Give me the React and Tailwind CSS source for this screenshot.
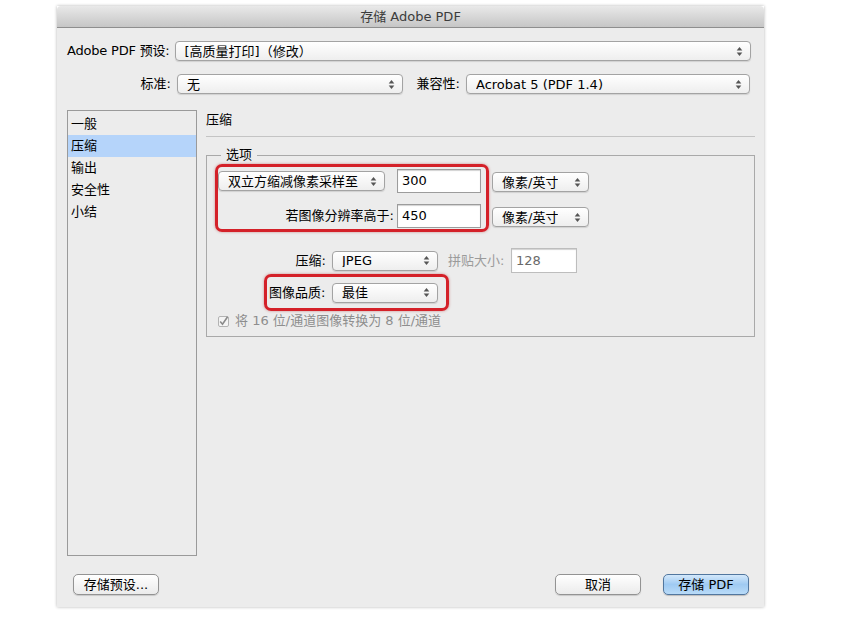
import React from 'react';

const Arrows = () => (
  <svg width="7" height="11" viewBox="0 0 7 11" className="shrink-0">
    <path d="M3.5 1 L6.3 4.4 H0.7 Z" fill="#555" />
    <path d="M3.5 10 L6.3 6.6 H0.7 Z" fill="#555" />
  </svg>
);

function Select({ className = '', children }) {
  return (
    <div className={`flex h-[20px] shrink-0 items-center justify-between rounded-[4px] border border-[#a3a3a3] bg-gradient-to-b from-white to-[#eeeeee] pl-[9px] pr-[7px] shadow-[0_1px_1px_rgba(0,0,0,0.12)] ${className}`}>
      <span className="truncate leading-none">{children}</span>
      <Arrows />
    </div>
  );
}

function Field({ className = '', children }) {
  return (
    <div className={`flex shrink-0 items-center border border-[#9c9c9c] bg-white pl-[4px] shadow-[inset_0_1px_1px_rgba(0,0,0,0.18)] ${className}`}>
      {children}
    </div>
  );
}

function Button({ primary, children }) {
  return (
    <div
      className={
        primary
          ? 'h-[21px] w-[86px] rounded-[5px] border border-[#52779f] bg-gradient-to-b from-[#d3e8fb] via-[#9fcaf2] to-[#b9dbf8] text-center leading-[19px] shadow-[0_1px_1px_rgba(0,0,0,0.2)]'
          : 'h-[21px] w-[86px] rounded-[5px] border border-[#939393] bg-gradient-to-b from-white to-[#ebebeb] text-center leading-[19px] shadow-[0_1px_1px_rgba(0,0,0,0.15)]'
      }
    >
      {children}
    </div>
  );
}

const sections = ['一般', '压缩', '输出', '安全性', '小结'];

export default function App() {
  return (
    <div className="min-h-[617px] w-[842px] bg-white pl-[57px] pt-[6px] font-['DejaVu_Sans','Noto_Sans_CJK_SC',sans-serif] text-[13px] text-black">
      <div className="w-[707px] shadow-[0_0_3px_rgba(0,0,0,0.3)]">
        {/* title bar */}
        <div className="flex h-[22px] items-center justify-center rounded-t-[4px] border-b border-[#8e8e8e] bg-gradient-to-b from-[#e9e9e9] to-[#c6c6c6] text-[#3c3c3c]">
          存储 Adobe PDF
        </div>

        {/* body */}
        <div className="flex h-[579px] flex-col bg-[#ececec] pl-[10px] pr-[13px] pt-[13px]">
          <div className="flex h-[20px] items-center">
            <div className="shrink-0 whitespace-nowrap pr-[5px] tracking-[-0.2px]">Adobe PDF 预设:</div>
            <Select className="flex-1">[高质量打印]（修改）</Select>
          </div>

          <div className="mt-[13px] flex h-[20px] items-center">
            <div className="w-[110px] shrink-0 pr-[6px] text-right">标准:</div>
            <Select className="w-[226px]">无</Select>
            <div className="w-[63px] shrink-0 pr-[6px] text-right">兼容性:</div>
            <Select className="w-[284px]">Acrobat 5 (PDF 1.4)</Select>
          </div>

          <div className="mt-[16px] flex">
            <div className="h-[446px] w-[130px] shrink-0 border border-[#9a9a9a] pt-[2px]">
              {sections.map((s) => (
                <div
                  key={s}
                  className={`h-[22px] pl-[3px] leading-[22px] ${s === '压缩' ? 'bg-[#b5d4fa]' : ''}`}
                >
                  {s}
                </div>
              ))}
            </div>

            <div className="-mr-[4px] ml-[9px] w-[549px] shrink-0">
              <div className="h-[27px] border-b border-[#c4c4c4] leading-[20px]">压缩</div>

              <fieldset className="mt-[10px] border border-[#a9a9a9] px-[8px] pb-[7px] pt-0">
                <legend className="ml-[6px] px-[5px] leading-[16px]">选项</legend>

                <div className="mt-[1px] flex items-start">
                  <div className="w-[274px] rounded-[7px] border-[3px] border-[#d42129] pb-[1px] pr-[5px] pt-[2px] shadow-[0_0_3px_rgba(160,0,0,0.4)]">
                    <div className="flex h-[24px] items-center gap-[12px]">
                      <Select className="w-[167px]">双立方缩减像素采样至</Select>
                      <Field className="h-[24px] w-[84px]">300</Field>
                    </div>
                    <div className="mt-[11px] flex h-[24px] items-center justify-end">
                      <div className="pr-[3px]">若图像分辨率高于:</div>
                      <Field className="h-[24px] w-[84px]">450</Field>
                    </div>
                  </div>
                  <div className="ml-[3px] flex flex-col pt-[8px]">
                    <Select className="w-[97px]">像素/英寸</Select>
                    <Select className="mt-[15px] w-[97px]">像素/英寸</Select>
                  </div>
                </div>

                <div className="mt-[16px] flex h-[25px] items-center">
                  <div className="w-[117px] shrink-0 pr-[6px] text-right">压缩:</div>
                  <Select className="w-[106px]">JPEG</Select>
                  <div className="ml-[10px] w-[63px] shrink-0 text-[#9b9b9b]">拼贴大小:</div>
                  <Field className="h-[25px] w-[66px] border-[#bdbdbd] text-[#6a6a6a]">128</Field>
                </div>

                <div className="ml-[49px] mt-[1px] flex h-[37px] w-[185px] items-center rounded-[7px] border-[3px] border-[#d42129] pl-[2px] shadow-[0_0_3px_rgba(160,0,0,0.4)]">
                  <div className="w-[63px] shrink-0">图像品质:</div>
                  <Select className="w-[106px]">最佳</Select>
                </div>

                <div className="ml-[3px] mt-[2px] flex h-[16px] items-center gap-[6px] text-[#8e8e8e]">
                  <svg width="11" height="11" viewBox="0 0 11 11" className="shrink-0">
                    <rect x="0.5" y="0.5" width="10" height="10" rx="1.5" fill="#f4f4f4" stroke="#b3b3b3" />
                    <path d="M2.2 5.6 L4.5 8.3 L9.6 0.8" fill="none" stroke="#8a8a8a" strokeWidth="1.6" />
                  </svg>
                  <span>将 16 位/通道图像转换为 8 位/通道</span>
                </div>
              </fieldset>
            </div>
          </div>

          <div className="mt-[18px] flex items-center justify-between">
            <div className="ml-[6px]">
              <Button>存储预设...</Button>
            </div>
            <div className="mr-[2px] flex gap-[22px]">
              <Button>取消</Button>
              <Button primary>存储 PDF</Button>
            </div>
          </div>
        </div>
      </div>
    </div>
  );
}
